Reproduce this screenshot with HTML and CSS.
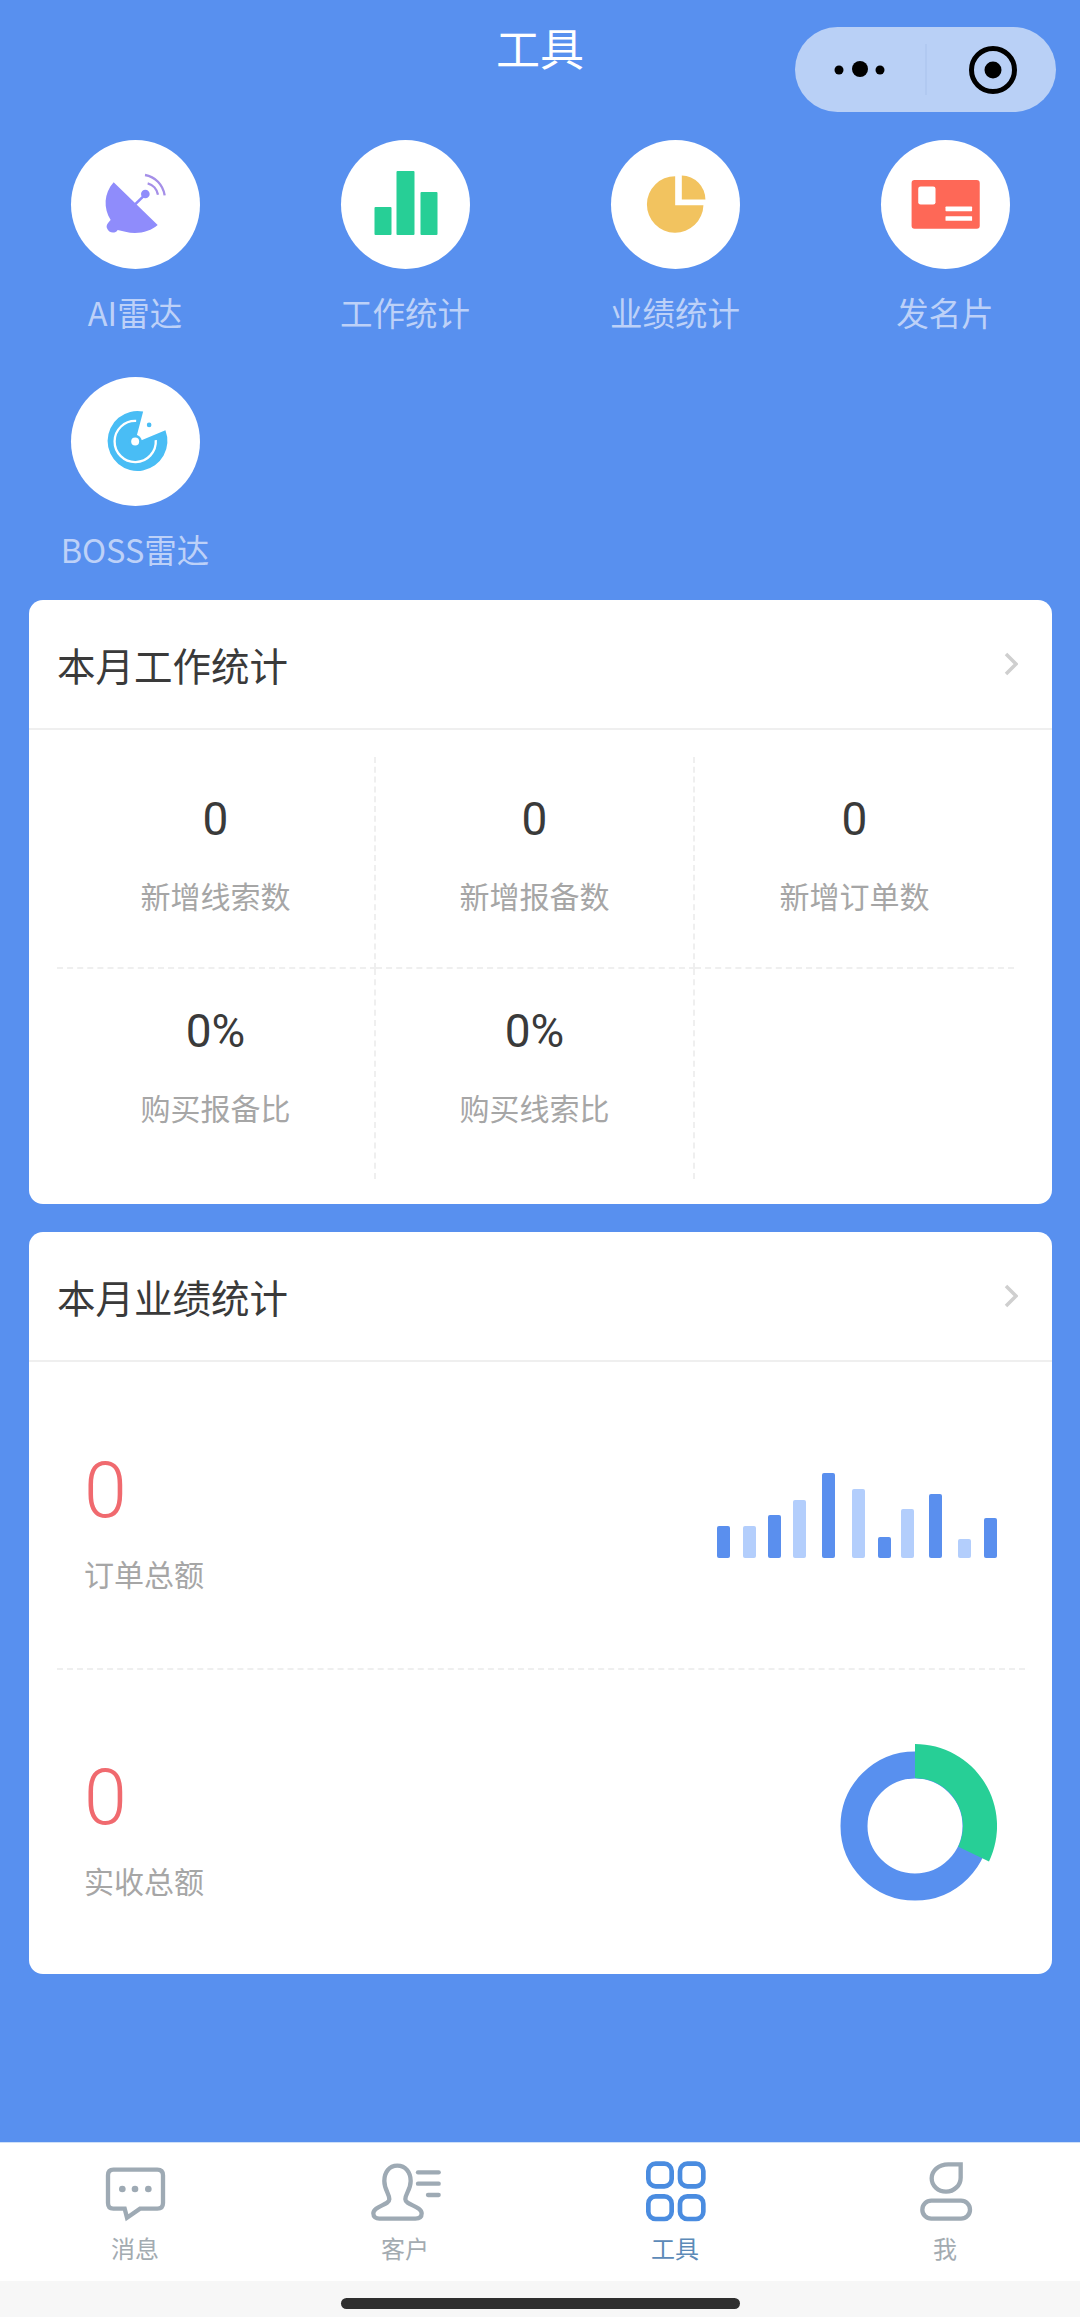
FILE: index.html
```html
<!DOCTYPE html>
<html lang="zh-CN">
<head>
<meta charset="utf-8">
<title>工具</title>
<link rel="stylesheet" href="styles.css">
</head>
<body>
<div class="page">
  <main class="main">
    <header class="nav">
      <h1 class="nav-title">工具</h1>
      <div class="capsule">
        <svg class="capsule-svg" viewBox="0 0 261 85">
          <circle class="ink" cx="44" cy="43" r="4.5"/>
          <circle class="ink" cx="65" cy="42" r="8"/>
          <circle class="ink" cx="85" cy="43" r="4.5"/>
          <line class="capsule-sep" x1="131" y1="17" x2="131" y2="68"/>
          <circle class="capsule-ring" cx="198" cy="43" r="21.5"/>
          <circle class="ink" cx="198" cy="43" r="8.5"/>
        </svg>
      </div>
    </header>

    <section class="tools">
      <div class="tool">
        <div class="tool-circle">
          <svg class="tool-svg" viewBox="92 60 387 387">
            <path class="radar-fill" d="M220 187 L352 315 C330 335 290 345 255 335 L232 330 C225 342 205 340 200 325 C196 315 205 306 211 300 C189 265 190 220 220 187 Z"/>
            <line class="radar-stem" x1="275" y1="262" x2="312" y2="226"/>
            <circle class="radar-fill" cx="315" cy="222" r="13"/>
            <path class="radar-arc" d="M322 190 C338 194 350 208 353 224"/>
            <path class="radar-arc" d="M314 165 C344 170 368 194 373 226"/>
          </svg>
        </div>
        <div class="tool-label">AI雷达</div>
      </div>
      <div class="tool">
        <div class="tool-circle">
          <svg class="tool-svg" viewBox="0 0 129 129">
            <rect class="green" x="33.5" y="67" width="17" height="28" rx="1"/>
            <rect class="green" x="55.5" y="31" width="18" height="64" rx="1"/>
            <rect class="green" x="79.5" y="52" width="17" height="43" rx="1"/>
          </svg>
        </div>
        <div class="tool-label">工作统计</div>
      </div>
      <div class="tool">
        <div class="tool-circle">
          <svg class="tool-svg" viewBox="32 28 388 388">
            <path class="yellow" d="M225 137 V224 H310 A85 85 0 1 1 225 137 Z"/>
            <path class="yellow" d="M245 135 A72 72 0 0 1 316 207 H245 Z"/>
          </svg>
        </div>
        <div class="tool-label">业绩统计</div>
      </div>
      <div class="tool">
        <div class="tool-circle">
          <svg class="tool-svg" viewBox="843 28 388 388">
            <rect class="coral" x="935" y="148" width="205" height="147" rx="9"/>
            <rect class="white" x="955" y="168" width="52" height="54" rx="7"/>
            <rect class="white" x="1037" y="228" width="80" height="14" rx="2"/>
            <rect class="white" x="1037" y="257" width="80" height="14" rx="2"/>
          </svg>
        </div>
        <div class="tool-label">发名片</div>
      </div>
      <div class="tool">
        <div class="tool-circle">
          <svg class="tool-svg" viewBox="212 108 388 388">
            <path class="sky" d="M410 284 L429 212 A90 90 0 1 0 496 268 L424 298 Z"/>
            <path class="boss-ring" d="M408 240 A62 62 0 1 0 467 298"/>
            <circle class="sky" cx="405" cy="302" r="20"/>
            <circle class="white" cx="405" cy="302" r="12"/>
            <circle class="sky" cx="447" cy="252" r="7"/>
          </svg>
        </div>
        <div class="tool-label">BOSS雷达</div>
      </div>
    </section>

    <section class="card">
      <div class="card-head">
        <h2 class="card-title">本月工作统计</h2>
        <svg class="chevron" viewBox="0 0 14 24"><path class="chevron-path" d="M2 2 L12 12 L2 22"/></svg>
      </div>
      <div class="work-grid">
        <div class="cell cell-line-r cell-line-b"><div class="cell-num">0</div><div class="cell-label">新增线索数</div></div>
        <div class="cell cell-line-r cell-line-b"><div class="cell-num">0</div><div class="cell-label">新增报备数</div></div>
        <div class="cell cell-line-b"><div class="cell-num">0</div><div class="cell-label">新增订单数</div></div>
        <div class="cell cell-line-r"><div class="cell-num">0%</div><div class="cell-label">购买报备比</div></div>
        <div class="cell cell-line-r"><div class="cell-num">0%</div><div class="cell-label">购买线索比</div></div>
        <div class="cell"></div>
      </div>
    </section>

    <section class="card card-perf">
      <div class="card-head">
        <h2 class="card-title">本月业绩统计</h2>
        <svg class="chevron" viewBox="0 0 14 24"><path class="chevron-path" d="M2 2 L12 12 L2 22"/></svg>
      </div>
      <div class="perf-list">
        <div class="perf-row perf-row-line">
          <div class="perf-text">
            <div class="perf-num">0</div>
            <div class="perf-label">订单总额</div>
          </div>
          <svg class="bars" viewBox="0 0 280 85">
            <rect class="bar-dark" x="0" y="53" width="13" height="32" rx="2"/>
            <rect class="bar-light" x="26" y="53" width="13" height="32" rx="2"/>
            <rect class="bar-dark" x="51" y="42" width="13" height="43" rx="2"/>
            <rect class="bar-light" x="76" y="27" width="13" height="58" rx="2"/>
            <rect class="bar-dark" x="105" y="0" width="13" height="85" rx="2"/>
            <rect class="bar-light" x="135" y="16" width="13" height="69" rx="2"/>
            <rect class="bar-dark" x="161" y="64" width="13" height="21" rx="2"/>
            <rect class="bar-light" x="184" y="36" width="13" height="49" rx="2"/>
            <rect class="bar-dark" x="212" y="21" width="13" height="64" rx="2"/>
            <rect class="bar-light" x="241" y="66" width="13" height="19" rx="2"/>
            <rect class="bar-dark" x="267" y="45" width="13" height="40" rx="2"/>
          </svg>
        </div>
        <div class="perf-row">
          <div class="perf-text">
            <div class="perf-num">0</div>
            <div class="perf-label">实收总额</div>
          </div>
          <svg class="donut" viewBox="0 0 164 164">
            <circle class="donut-ring" cx="82" cy="82" r="61"/>
            <path class="green" d="M82 0 A82 82 0 0 1 156 117.4 L125.3 102.7 A48 48 0 0 0 82 34 Z"/>
          </svg>
        </div>
      </div>
    </section>
  </main>

  <nav class="tabbar">
    <div class="tab">
      <svg class="tab-icon" viewBox="45 24 240 192">
        <path class="tab-stroke" d="M100 56 H232 C243 56 249 62 249 73 V156 C249 167 243 173 232 173 H180 L141 200 L134 173 H100 C89 173 84 167 84 156 V73 C84 62 89 56 100 56 Z"/>
        <circle class="tab-fill" cx="127" cy="114" r="10"/>
        <circle class="tab-fill" cx="165" cy="114" r="10"/>
        <circle class="tab-fill" cx="205" cy="114" r="10"/>
      </svg>
      <div class="tab-label">消息</div>
    </div>
    <div class="tab">
      <svg class="tab-icon" viewBox="855 24 240 192">
        <path class="tab-stroke" d="M952 44 C927 44 913 64 913 90 C913 116 928 128 928 145 C928 162 880 165 880 187 C880 198 888 203 898 203 H1006 C1017 203 1025 198 1025 187 C1025 165 976 162 976 145 C976 128 992 116 992 90 C992 64 977 44 952 44 Z"/>
        <line class="tab-stroke tab-round" x1="1014" y1="64" x2="1076" y2="64"/>
        <line class="tab-stroke tab-round" x1="1014" y1="98" x2="1076" y2="98"/>
        <line class="tab-stroke tab-round" x1="1044" y1="132" x2="1076" y2="132"/>
      </svg>
      <div class="tab-label">客户</div>
    </div>
    <div class="tab tab-active">
      <svg class="tab-icon" viewBox="45 24 240 192">
        <rect class="tab-stroke" x="85" y="38" width="70" height="68" rx="22"/>
        <rect class="tab-stroke" x="180" y="38" width="70" height="68" rx="22"/>
        <rect class="tab-stroke" x="85" y="136" width="70" height="68" rx="22"/>
        <rect class="tab-stroke" x="180" y="136" width="70" height="68" rx="22"/>
      </svg>
      <div class="tab-label">工具</div>
    </div>
    <div class="tab">
      <svg class="tab-icon" viewBox="855 24 240 192">
        <path class="tab-stroke" d="M1022 40 H985 C955 40 935 60 935 82 C935 105 955 122 978 122 C1003 122 1022 102 1022 80 Z"/>
        <rect class="tab-stroke" x="907" y="149" width="143" height="54" rx="27"/>
      </svg>
      <div class="tab-label">我</div>
    </div>
  </nav>

  <div class="home-area"><div class="home-bar"></div></div>
</div>
</body>
</html>
```
FILE: styles.css
```css
* { box-sizing: border-box; }
html, body { margin: 0; padding: 0; height: 100%; }
body {
  font-family: "Noto Sans CJK SC", "Noto Sans", sans-serif;
  background: #5890ef;
}
.page {
  display: flex;
  flex-direction: column;
  height: 2317px;
  overflow: hidden;
}
.main { flex: 1; min-height: 0; background: #5890ef; }

/* nav */
.nav {
  position: relative;
  height: 100px;
  display: flex;
  align-items: flex-start;
  justify-content: center;
  padding-top: 17px;
}
.nav-title {
  margin: 0;
  font-size: 44px;
  font-weight: 400;
  line-height: 60px;
  color: #fff;
}
.capsule {
  position: absolute;
  left: 795px;
  top: 27px;
  width: 261px;
  height: 85px;
  border-radius: 43px;
  background: #b9d0f6;
}
.capsule-svg { display: block; width: 261px; height: 85px; }
.ink { fill: #000; }
.capsule-sep { stroke: #a9c2ec; stroke-width: 1; }
.capsule-ring { fill: none; stroke: #000; stroke-width: 5; }

/* tool icons */
.tools {
  display: grid;
  grid-template-columns: repeat(4, 270px);
  row-gap: 41px;
  padding-top: 40px;
  margin-bottom: 27px;
}
.tool {
  display: flex;
  flex-direction: column;
  align-items: center;
}
.tool-circle {
  width: 129px;
  height: 129px;
  border-radius: 50%;
  background: #fff;
}
.tool-svg { display: block; width: 129px; height: 129px; }
.tool-label {
  margin-top: 19px;
  font-size: 32.5px;
  line-height: 48px;
  color: #bdd1f8;
  white-space: nowrap;
}
.radar-fill { fill: #8f8cfb; }
.radar-stem { stroke: #8f8cfb; stroke-width: 8; }
.radar-arc { fill: none; stroke: #a58fe8; stroke-width: 7; }
.green { fill: #27cf96; }
.yellow { fill: #f2c35f; }
.coral { fill: #fe6857; }
.white { fill: #fff; }
.sky { fill: #49bdf5; }
.boss-ring { fill: none; stroke: #fff; stroke-width: 7; }

/* cards */
.card {
  margin: 0 28px 0 29px;
  background: #fff;
  border-radius: 14px;
  overflow: hidden;
}
.card-perf { margin-top: 28px; }
.card-head {
  display: flex;
  align-items: center;
  justify-content: space-between;
  height: 130px;
  padding: 0 34px 0 28px;
  border-bottom: 2px solid #efefef;
}
.card-title {
  margin: 0;
  font-size: 38.5px;
  font-weight: 400;
  line-height: 54px;
  color: #3a3a3a;
}
.chevron { display: block; width: 14px; height: 24px; }
.chevron-path { fill: none; stroke: #cfcfcf; stroke-width: 3.5; }

/* work grid */
.work-grid {
  display: grid;
  grid-template-columns: repeat(3, 1fr);
  grid-template-rows: 212px 210px;
  margin: 27px 38px 25px 28px;
}
.cell { padding-top: 32px; text-align: center; }
.cell-line-r { border-right: 2px dashed #efefef; }
.cell-line-b { border-bottom: 2px dashed #efefef; }
.cell-num {
  font-family: "Roboto", sans-serif;
  font-size: 46px;
  line-height: 60px;
  color: #3a3a3a;
}
.cell-label {
  margin-top: 25px;
  font-size: 30px;
  line-height: 42px;
  color: #a6a6a6;
}

/* performance */
.perf-list { margin: 0 27px 0 28px; }
.perf-row {
  display: flex;
  align-items: center;
  justify-content: space-between;
  height: 304px;
  padding: 0 28px 0 27px;
}
.perf-row-line {
  height: 308px;
  border-bottom: 2px dashed #efefef;
}
.perf-text { padding-top: 14px; }
.perf-num {
  font-family: "Roboto", sans-serif;
  font-weight: 300;
  font-size: 77px;
  line-height: 80px;
  color: #f06a6f;
}
.perf-label {
  margin-top: 21px;
  font-size: 30px;
  line-height: 42px;
  color: #a6a6a6;
}
.bars { display: block; width: 280px; height: 85px; }
.bar-dark { fill: #5a8fee; }
.bar-light { fill: #b3cefc; }
.donut { display: block; width: 164px; height: 164px; margin-top: 7px; }
.donut-ring { fill: none; stroke: #5890ef; stroke-width: 27; }

/* tab bar */
.tabbar {
  display: grid;
  grid-template-columns: repeat(4, 1fr);
  height: 139px;
  padding-top: 16px;
  background: #fff;
  border-top: 1px solid #cfe0f7;
}
.tab {
  display: flex;
  flex-direction: column;
  align-items: center;
}
.tab-icon { display: block; width: 80px; height: 64px; }
.tab-stroke { fill: none; stroke: #9eaab4; stroke-width: 13; }
.tab-round { stroke-linecap: round; }
.tab-fill { fill: #9eaab4; }
.tab-label {
  margin-top: 10px;
  font-size: 24px;
  line-height: 30px;
  color: #a3abb1;
}
.tab-active .tab-stroke { stroke: #4a8ce0; stroke-width: 14; }
.tab-active .tab-label { color: #5c8ab8; }

/* home indicator */
.home-area {
  height: 36px;
  padding-top: 17px;
  background: #f7f7f7;
}
.home-bar {
  width: 399px;
  height: 11px;
  margin: 0 auto;
  border-radius: 6px;
  background: #2f2f2f;
}
```
